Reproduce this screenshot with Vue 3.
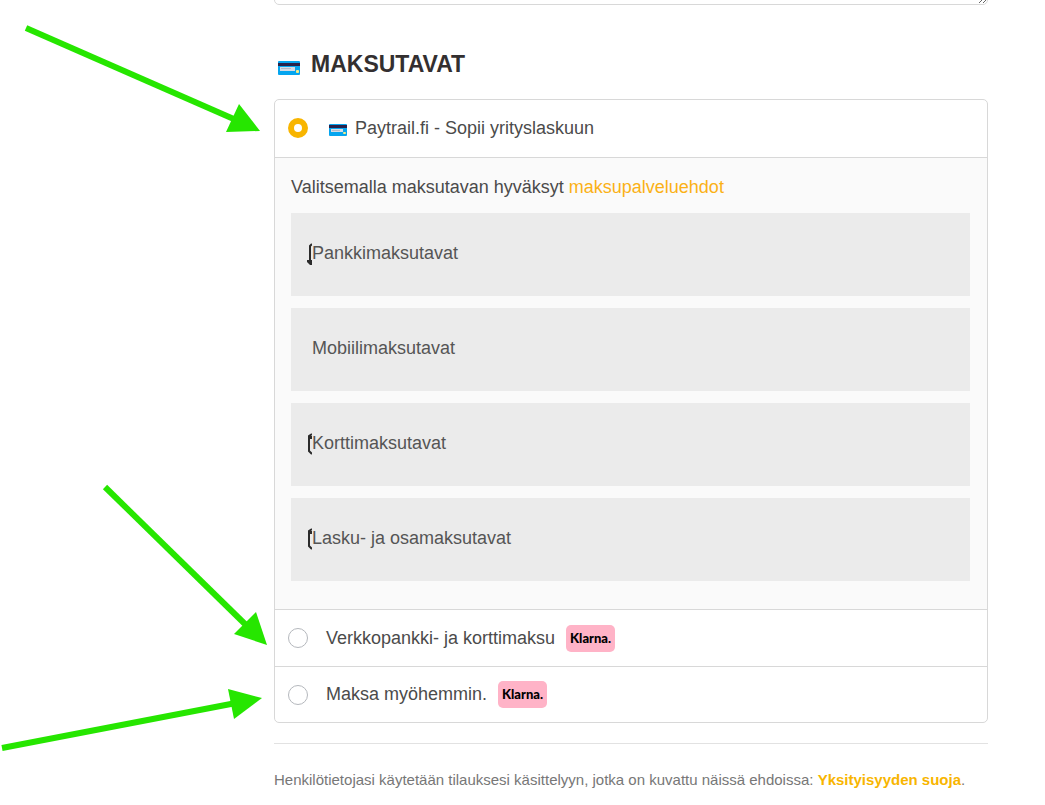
<script setup>
import { ref } from 'vue'

const method = ref('paytrail')
const notes = ref('')

const groups = [
  { name: 'Pankkimaksutavat', mark: 'M5 3 L3 5 V20', tip: 'M0 19 H5 V24 H3 L0 21Z' },
  { name: 'Mobiilimaksutavat', mark: '', tip: '' },
  { name: 'Korttimaksutavat', mark: 'M5 3 L2 5 V20 L5 23', tip: 'M2 5 H5 V8 H2Z' },
  { name: 'Lasku- ja osamaksutavat', mark: 'M5 3 L2 5 V20 L5 23', tip: 'M2 5 H5 V8 H2Z' }
]

const klarnaMethods = [
  { id: 'klarna-now', name: 'Verkkopankki- ja korttimaksu' },
  { id: 'klarna-later', name: 'Maksa myöhemmin.' }
]
</script>

<template>
  <div class="page">
    <main class="checkout">
      <div class="notes">
        <textarea v-model="notes" aria-label="Lisätiedot"></textarea>
      </div>

      <h2 class="title">
        <svg class="card-icon" viewBox="0 0 22 14" aria-hidden="true">
          <rect width="22" height="14" rx="1" fill="#05a5ef" />
          <rect y="2" width="22" height="3" fill="#28224b" />
          <rect x="2" y="6" width="15" height="4" fill="#d5dce6" />
          <rect x="3" y="7" width="10" height="1" fill="#b4bac8" />
          <rect x="18" y="9" width="3" height="3" rx="1" fill="#f7ec84" />
        </svg>
        MAKSUTAVAT
      </h2>

      <section class="methods">
        <div class="method first">
          <input id="paytrail" v-model="method" type="radio" name="method" value="paytrail" />
          <label for="paytrail">
            <svg class="card-icon small" viewBox="0 0 18 12" aria-hidden="true">
              <rect width="18" height="12" rx="1" fill="#05a5ef" />
              <rect y="1" width="18" height="3" fill="#28224b" />
              <rect x="2" y="5" width="12" height="3" fill="#d5dce6" />
              <rect x="3" y="6" width="8" height="1" fill="#b4bac8" />
              <rect x="14" y="8" width="3" height="2" rx="1" fill="#f7ec84" />
            </svg>
            Paytrail.fi - Sopii yrityslaskuun
          </label>
        </div>

        <div class="panel">
          <p>Valitsemalla maksutavan hyväksyt <a href="#ehdot">maksupalveluehdot</a></p>
          <div class="groups">
            <button v-for="group in groups" :key="group.name" type="button" class="group">
              <svg class="mark" viewBox="0 0 5 24" aria-hidden="true">
                <path :d="group.mark" fill="none" stroke="#2b2b2b" stroke-width="2" />
                <path :d="group.tip" fill="#2b2b2b" />
              </svg>
              <span>{{ group.name }}</span>
            </button>
          </div>
        </div>

        <div v-for="item in klarnaMethods" :key="item.id" class="method">
          <input :id="item.id" v-model="method" type="radio" name="method" :value="item.id" />
          <label :for="item.id">{{ item.name }} <span class="klarna">Klarna.</span></label>
        </div>
      </section>

      <p class="privacy">
        Henkilötietojasi käytetään tilauksesi käsittelyyn, jotka on kuvattu näissä ehdoissa:
        <a href="#yksityisyys">Yksityisyyden suoja</a>.
      </p>
    </main>

    <svg class="arrows" width="274" height="760" viewBox="0 0 274 760" aria-hidden="true">
      <g stroke="#26e600" stroke-width="6">
        <path d="M26 28 L236 120" />
        <path d="M105 487 L247 626" />
        <path d="M2 748 L236 703" />
      </g>
      <g fill="#26e600">
        <path d="M239 104 L260 131 L226 132Z" />
        <path d="M256 612 L267 645 L234 634Z" />
        <path d="M228 689 L262 698 L234 719Z" />
      </g>
    </svg>
  </div>
</template>

<style>
body {
  margin: 0;
  background: #fff;
}
</style>

<style scoped>
.page {
  position: relative;
  font-family: "Liberation Sans", Arial, sans-serif;
  font-size: 18px;
  line-height: 27px;
  color: #4b4b4b;
}

.checkout {
  margin: 0 57px 0 274px;
}

.notes {
  display: flex;
  align-items: flex-end;
  height: 5px;
  overflow: hidden;
}

textarea {
  flex: 1;
  box-sizing: border-box;
  height: 80px;
  border: 1px solid #d8d8d8;
  border-radius: 5px;
  resize: both;
}

.title {
  display: flex;
  align-items: center;
  gap: 11px;
  margin: 43px 0 19px;
  padding-left: 4px;
  font-size: 23px;
  line-height: 32px;
  font-weight: 700;
  color: #332f30;
}

.card-icon {
  flex: none;
  width: 22px;
  height: 14px;
  margin-top: 8px;
}

.card-icon.small {
  width: 18px;
  height: 12px;
  margin: 4px 8px 0 3px;
}

.methods {
  border: 1px solid #d8d8d8;
  border-radius: 5px;
}

.method {
  display: flex;
  align-items: center;
  min-height: 56px;
  padding-left: 13px;
}

.method + .method {
  border-top: 1px solid #d8d8d8;
  min-height: 55px;
}

.method.first {
  padding-bottom: 1px;
}

input[type="radio"] {
  appearance: none;
  flex: none;
  box-sizing: border-box;
  width: 20px;
  height: 20px;
  margin: 0 18px 0 0;
  border: 1px solid #b5b8bd;
  border-radius: 50%;
  background: #fff;
}

input[type="radio"]:checked {
  border: 6px solid #f8b500;
}

label {
  display: flex;
  align-items: center;
}

.klarna {
  margin-left: 11px;
  width: 49px;
  border-radius: 5px;
  background: #ffb3c7;
  color: #000;
  font-family: Lato, sans-serif;
  font-size: 13px;
  font-weight: 900;
  text-align: center;
}

.panel {
  padding: 16px 17px 28px 16px;
  border-top: 1px solid #d8d8d8;
  border-bottom: 1px solid #d8d8d8;
  background: #fafafa;
}

.panel p {
  margin: 0 0 12px;
}

a {
  color: #f8b500;
  text-decoration: none;
}

.panel a {
  color: #fbb116;
}

.groups {
  display: grid;
  gap: 12px;
}

.group {
  display: flex;
  align-items: center;
  height: 83px;
  padding: 0 16px 3px;
  border: 0;
  background: #ebebeb;
  color: #555;
  font: inherit;
  text-align: left;
}

.mark {
  flex: none;
  width: 5px;
  height: 24px;
}

.privacy {
  margin: 20px 0 0;
  padding: 24px 0;
  border-top: 1px solid #e2e2e2;
  font-size: 15px;
  line-height: 24px;
  color: #777;
}

.privacy a {
  font-weight: 700;
}

.arrows {
  position: absolute;
  top: 0;
  left: 0;
  pointer-events: none;
}
</style>
